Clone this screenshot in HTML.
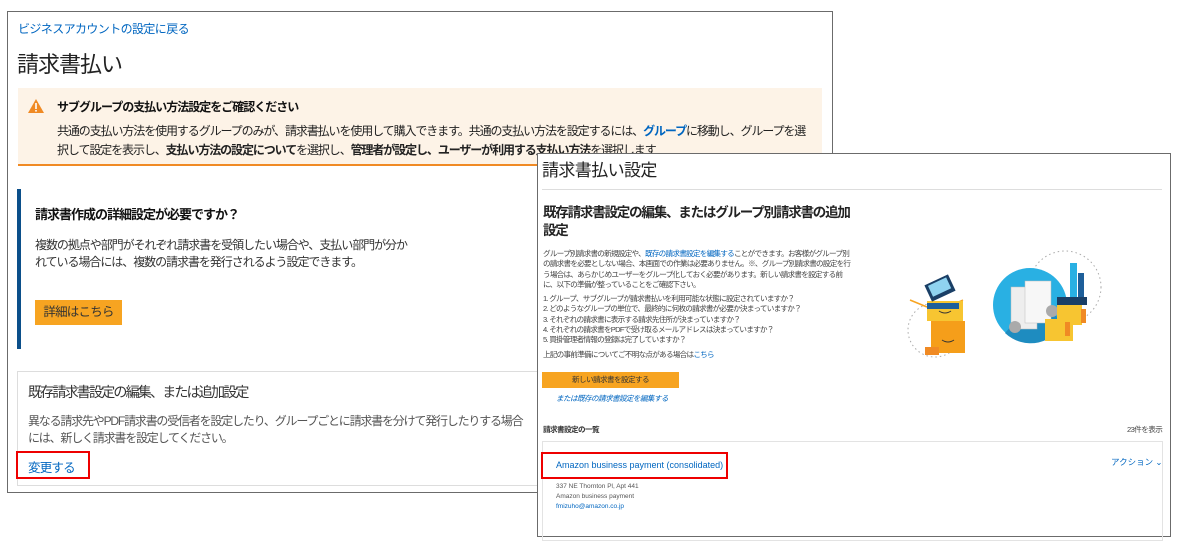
<!DOCTYPE html>
<html><head><meta charset="utf-8"><style>
*{margin:0;padding:0;box-sizing:border-box}
body{width:1190px;height:544px;background:#fff;position:relative;overflow:hidden;font-family:"Liberation Sans","Noto Sans CJK JP",sans-serif;color:#111}
.a{position:absolute;white-space:nowrap}
.blue{color:#0066c0}
</style></head><body>
<!-- left panel -->
<div class="a" style="left:7px;top:11px;width:826px;height:482px;border:1.5px solid #6b6b6b;background:#fff"></div>
<div class="a blue" style="left:18px;top:20px;font-size:12px;letter-spacing:-0.6px">ビジネスアカウントの設定に戻る</div>
<div class="a" style="left:17px;top:47px;font-size:22px;color:#222;letter-spacing:-1px">請求書払い</div>
<div class="a" style="left:18px;top:88px;width:804px;height:78px;background:#fdf3e7;border-bottom:2px solid #f08a24"></div>
<svg class="a" style="left:27px;top:98px" width="18" height="16" viewBox="0 0 18 16"><path d="M9 1 L17 15 L1 15 Z" fill="#f08a24"/><rect x="8.2" y="5" width="1.6" height="6" fill="#fff"/><rect x="8.2" y="12" width="1.6" height="1.6" fill="#fff"/></svg>
<div class="a" style="left:57px;top:98px;font-size:12px;font-weight:bold;letter-spacing:-1px">サブグループの支払い方法設定をご確認ください</div>
<div class="a" style="left:57px;top:122px;font-size:12px;color:#222;line-height:19px;letter-spacing:-1.1px">共通の支払い方法を使用するグループのみが、請求書払いを使用して購入できます。共通の支払い方法を設定するには、<b class="blue">グループ</b>に移動し、グループを選<br>択して設定を表示し、<b>支払い方法の設定について</b>を選択し、<b>管理者が設定し、ユーザーが利用する支払い方法</b>を選択します</div>
<div class="a" style="left:17px;top:189px;width:4px;height:160px;background:#0b4f8a"></div>
<div class="a" style="left:35px;top:204px;font-size:13px;font-weight:bold;letter-spacing:-1px">請求書作成の詳細設定が必要ですか？</div>
<div class="a" style="left:35px;top:237px;font-size:12px;color:#333;line-height:17px;letter-spacing:-1.05px">複数の拠点や部門がそれぞれ請求書を受領したい場合や、支払い部門が分か<br>れている場合には、複数の請求書を発行されるよう設定できます。</div>
<div class="a" style="left:35px;top:300px;width:87px;height:25px;background:#f7a421;font-size:12.5px;color:#333;text-align:center;line-height:25px;letter-spacing:-0.8px">詳細はこちら</div>
<div class="a" style="left:17px;top:371px;width:540px;height:115px;border:1px solid #ddd;border-right:none"></div>
<div class="a" style="left:28px;top:382px;font-size:14px;color:#333;letter-spacing:-1.8px">既存請求書設定の編集、または追加設定</div>
<div class="a" style="left:28px;top:413px;font-size:12px;color:#555;line-height:17px;letter-spacing:-1.2px">異なる請求先やPDF請求書の受信者を設定したり、グループごとに請求書を分けて発行したりする場合<br>には、新しく請求書を設定してください。</div>
<div class="a blue" style="left:28px;top:457px;font-size:12.5px;letter-spacing:-0.8px">変更する</div>
<div class="a" style="left:16px;top:451px;width:74px;height:28px;border:2.5px solid #e00"></div>
<div class="a" style="left:842px;top:153px;width:22px;height:8px;background:#f7a421"></div>
<!-- right panel -->
<div class="a" style="left:537px;top:153px;width:634px;height:384px;border:1.5px solid #6b6b6b;background:#fff"></div>
<div class="a" style="left:542px;top:156px;font-size:17px;color:#222;letter-spacing:-0.6px">請求書払い設定</div>
<div class="a" style="left:542px;top:189px;width:620px;height:1px;background:#ddd"></div>
<div class="a" style="left:543px;top:204px;font-size:13.5px;font-weight:bold;line-height:18px;color:#222;letter-spacing:-1.2px">既存請求書設定の編集、またはグループ別請求書の追加<br>設定</div>
<div class="a" style="left:543px;top:249px;font-size:7.6px;color:#444;line-height:10.3px;letter-spacing:-0.75px">グループ別請求書の新規設定や、<span class="blue">既存の請求書設定を編集する</span>ことができます。お客様がグループ別<br>の請求書を必要としない場合、本画面での作業は必要ありません。※、グループ別請求書の設定を行<br>う場合は、あらかじめユーザーをグループ化しておく必要があります。新しい請求書を設定する前<br>に、以下の準備が整っていることをご確認下さい。</div>
<div class="a" style="left:543px;top:294px;font-size:7.6px;color:#444;line-height:10.3px;letter-spacing:-0.75px">1. グループ、サブグループが請求書払いを利用可能な状態に設定されていますか？<br>2. どのようなグループの単位で、最終的に何枚の請求書が必要か決まっていますか？<br>3. それぞれの請求書に表示する請求先住所が決まっていますか？<br>4. それぞれの請求書をPDFで受け取るメールアドレスは決まっていますか？<br>5. 買掛管理者情報の登録は完了していますか？</div>
<div class="a" style="left:543px;top:349px;font-size:7.6px;color:#444;letter-spacing:-0.75px">上記の事前準備についてご不明な点がある場合は<span class="blue">こちら</span></div>
<div class="a" style="left:542px;top:372px;width:137px;height:16px;background:#f7a421;font-size:7.6px;color:#333;text-align:center;line-height:16px;letter-spacing:-0.6px">新しい請求書を設定する</div>
<div class="a blue" style="left:556px;top:393px;font-size:7.6px;font-style:italic;letter-spacing:-0.6px">または既存の請求書設定を編集する</div>
<div class="a" style="left:543px;top:424px;font-size:7.6px;font-weight:bold;color:#333;letter-spacing:-0.6px">請求書設定の一覧</div>
<div class="a" style="left:1127px;top:424px;font-size:7.6px;color:#444;letter-spacing:-0.6px">23件を表示</div>
<div class="a" style="left:542px;top:441px;width:621px;height:100px;border:1px solid #e3e3e3"></div>
<div class="a blue" style="left:556px;top:460px;font-size:9px">Amazon business payment (consolidated)</div>
<div class="a" style="left:541px;top:452px;width:187px;height:27px;border:2.5px solid #e00"></div>
<div class="a blue" style="left:1111px;top:456px;font-size:8.5px">アクション ⌄</div>
<div class="a" style="left:556px;top:482px;font-size:6.5px;color:#555;line-height:10px">337 NE Thornton Pl, Apt 441<br>Amazon business payment<br><span class="blue">fmizuho@amazon.co.jp</span></div>
<!-- illustration -->
<svg class="a" style="left:905px;top:245px" width="200" height="120" viewBox="0 0 200 120">
<circle cx="30" cy="85" r="27" fill="none" stroke="#aaa" stroke-dasharray="1.5 3"/>
<circle cx="160" cy="42" r="36" fill="none" stroke="#aaa" stroke-dasharray="1.5 3"/>
<path d="M5 55 L22 62 M58 55 L42 62" stroke="#f7a421" stroke-width="1.5"/>
<rect x="22" y="56" width="36" height="20" fill="#f7c531"/>
<rect x="26" y="76" width="34" height="32" fill="#f59e1a"/>
<path d="M34 66 q6 4 12 0 M37 95 q6 4 12 0" stroke="#333" fill="none" stroke-width="1"/>
<rect x="22" y="34" width="26" height="18" fill="#1a3f66" transform="rotate(-25 35 43)"/>
<rect x="25" y="36" width="20" height="12" fill="#8fd3f0" transform="rotate(-25 35 43)"/>
<rect x="22" y="58" width="32" height="6" fill="#1e5f9a"/>
<rect x="20" y="102" width="14" height="8" fill="#f08a24"/>
<circle cx="125" cy="60" r="37" fill="#29b0e3"/>
<path d="M125 60 L160 75 A37 37 0 0 1 100 88 Z" fill="#1e8cc0"/>
<rect x="106" y="42" width="26" height="42" fill="#eee" stroke="#bbb" stroke-width=".5"/>
<rect x="120" y="36" width="26" height="42" fill="#f7f7f7" stroke="#bbb" stroke-width=".5"/>
<circle cx="110" cy="82" r="6" fill="#aaa"/><circle cx="147" cy="66" r="6" fill="#aaa"/>
<rect x="152" y="60" width="25" height="20" fill="#f7c531"/>
<rect x="140" y="74" width="28" height="22" fill="#f7c531"/>
<rect x="176" y="64" width="5" height="14" fill="#f08a24"/>
<rect x="160" y="77" width="5" height="14" fill="#f08a24"/>
<rect x="152" y="52" width="30" height="8" fill="#1a3f66"/>
<rect x="165" y="18" width="7" height="34" fill="#29b0e3"/>
<rect x="173" y="28" width="6" height="24" fill="#1e5f9a"/>
</svg>
</body></html>
